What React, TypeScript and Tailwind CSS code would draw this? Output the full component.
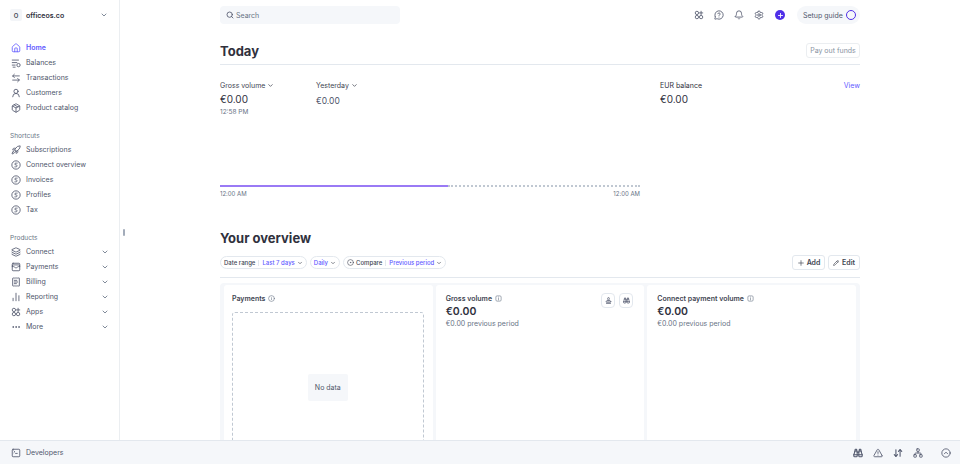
import {
  House, ArrowLeftRight, UserRound, Package, Rocket, Layers, WalletCards, ReceiptText,
  ChartNoAxesColumn, Ellipsis, SquareTerminal, MessageCircleQuestion, Bell, Settings, Search,
  ChevronDown, Plus, Pencil, Info, Binoculars, TriangleAlert, ArrowDownUp, Network, CircleChevronUp,
  CircleDot, Stamp,
} from "lucide-react";
import type { ReactNode } from "react";

const AppsIcon = ({ className }: { className?: string }) => (
  <svg className={className} viewBox="0 0 24 24" fill="none" stroke="currentColor" strokeWidth="2">
    <circle cx="7" cy="7" r="4" />
    <circle cx="7" cy="17" r="4" />
    <circle cx="17" cy="17" r="4" />
    <path d="M17 3v8M13 7h8" strokeLinecap="round" />
  </svg>
);

const BalancesIcon = ({ className }: { className?: string }) => (
  <svg className={className} viewBox="0 0 24 24" fill="none" stroke="currentColor" strokeWidth="2">
    <path d="M3 5h15M3 11h11M3 17h7M5 22h5" strokeLinecap="round" />
    <circle cx="18" cy="17" r="4" />
  </svg>
);

const ShortcutIcon = ({ className }: { className?: string }) => (
  <svg className={className} viewBox="0 0 24 24" fill="none" stroke="currentColor" strokeWidth="2">
    <circle cx="12" cy="12" r="10" />
    <path d="M15 7.5h-5l-.5 4h2.5a2.5 2.5 0 010 5H9" strokeWidth="1.8" strokeLinecap="round" />
  </svg>
);

const SquareInfo = () => (
  <svg className="h-[7px] w-[7px] text-[#687385]" viewBox="0 0 24 24" fill="none" stroke="currentColor" strokeWidth="2">
    <rect x="3" y="3" width="18" height="18" rx="4" />
    <path d="M12 11v6M12 7h.01" strokeLinecap="round" />
  </svg>
);

const mainNav = [
  { label: "Balances", icon: BalancesIcon },
  { label: "Transactions", icon: ArrowLeftRight },
  { label: "Customers", icon: UserRound },
  { label: "Product catalog", icon: Package },
];
const shortcuts = [
  { label: "Subscriptions", icon: Rocket },
  { label: "Connect overview", icon: ShortcutIcon },
  { label: "Invoices", icon: ShortcutIcon },
  { label: "Profiles", icon: ShortcutIcon },
  { label: "Tax", icon: ShortcutIcon },
];
const products = [
  { label: "Connect", icon: Layers },
  { label: "Payments", icon: WalletCards },
  { label: "Billing", icon: ReceiptText },
  { label: "Reporting", icon: ChartNoAxesColumn },
  { label: "Apps", icon: AppsIcon },
  { label: "More", icon: Ellipsis },
];

function NavRow({ label, icon: Icon, chevron }: { label: string; icon: any; chevron?: boolean }) {
  return (
    <div className="flex h-[15px] items-center text-[#4f566b]">
      <Icon className="ml-[11px] h-[10px] w-[10px] shrink-0" strokeWidth={2} />
      <span className="ml-[5px] flex-1 whitespace-nowrap">{label}</span>
      {chevron && <ChevronDown className="mr-[10px] h-[8px] w-[8px] text-[#687385]" strokeWidth={2.5} />}
    </div>
  );
}

function Pill({ children }: { children: ReactNode }) {
  return (
    <div className="flex h-[13px] items-center rounded-full border border-[#e3e8ee] px-[3px] text-[6px] font-medium whitespace-nowrap">
      {children}
    </div>
  );
}

function Card({ title, children, actions }: { title: string; children?: ReactNode; actions?: boolean }) {
  return (
    <div className="flex min-w-0 flex-col rounded-t-[3px] bg-white pl-[10px] pt-[9px]">
      <div className="flex items-start justify-between">
        <div>
          <div className="flex h-[9px] items-center gap-[3px] text-[7px] leading-none font-semibold text-[#414552]">
            {title}
            <SquareInfo />
          </div>
          {children}
        </div>
        {actions && (
          <div className="-mt-[1px] mr-[11px] flex gap-[4px]">
            <div className="flex h-[15px] w-[14px] items-center justify-center rounded-[4px] border border-[#e3e8ee] text-[#4f566b]">
              <Stamp className="h-[7px] w-[7px]" strokeWidth={2.5} />
            </div>
            <div className="flex h-[15px] w-[14px] items-center justify-center rounded-[4px] border border-[#e3e8ee] text-[#4f566b]">
              <Binoculars className="h-[7px] w-[7px]" strokeWidth={2.5} />
            </div>
          </div>
        )}
      </div>
    </div>
  );
}

const Metric = () => (
  <>
    <div className="mt-[2px] text-[10.5px] leading-[13px] font-semibold text-[#30313d]">€0.00</div>
    <div className="text-[7px] leading-[11px] text-[#687385]">€0.00 previous period</div>
  </>
);

export default function App() {
  return (
    <div className="relative flex h-[464px] w-[960px] flex-col overflow-hidden bg-white text-[7px] leading-[15px] text-[#414552] [font-family:Inter,sans-serif]">
      <div className="flex min-h-0 flex-1">
        <aside className="w-[120px] shrink-0 border-r border-[#ebeef1] pt-[7px]">
          <div className="flex h-[16px] items-center">
            <div className="ml-[10px] flex h-[12px] w-[12px] items-center justify-center rounded-[2px] bg-[#f3f5f8] text-[6px] font-semibold">O</div>
            <span className="ml-[4px] flex-1 font-semibold text-[#30313d]">officeos.co</span>
            <ChevronDown className="mr-[11px] h-[8px] w-[8px] text-[#687385]" strokeWidth={2.5} />
          </div>
          <div className="mt-[17px]">
            <div className="flex h-[15px] items-center font-semibold text-[#635bff]">
              <House className="ml-[11px] h-[10px] w-[10px]" strokeWidth={2} />
              <span className="ml-[5px]">Home</span>
            </div>
            {mainNav.map((n) => (
              <NavRow key={n.label} {...n} />
            ))}
          </div>
          <div className="mt-[15px] pl-[10px] text-[6.5px] leading-[13px] text-[#687385]">Shortcuts</div>
          <div className="-mt-[1px]">
            {shortcuts.map((n) => (
              <NavRow key={n.label} {...n} />
            ))}
          </div>
          <div className="mt-[15px] pl-[10px] text-[6.5px] leading-[13px] text-[#687385]">Products</div>
          <div className="-mt-[1px]">
            {products.map((n) => (
              <NavRow key={n.label} {...n} chevron />
            ))}
          </div>
        </aside>

        <main className="min-w-0 flex-1 overflow-hidden pl-[100px] pr-[100px] pt-[6px]">
          <div className="flex h-[18px] items-center justify-between">
            <div className="flex h-[18px] w-[180px] items-center rounded-[4px] bg-[#f5f7fa] pl-[6px] text-[#687385]">
              <Search className="h-[8px] w-[8px] text-[#4f566b]" strokeWidth={2.5} />
              <span className="ml-[2px]">Search</span>
            </div>
            <div className="flex items-center text-[#4f566b]">
              <AppsIcon className="h-[10px] w-[10px]" />
              <MessageCircleQuestion className="ml-[10px] h-[10px] w-[10px]" strokeWidth={2} />
              <Bell className="ml-[10px] h-[10px] w-[10px]" strokeWidth={2} />
              <Settings className="ml-[10px] h-[10px] w-[10px]" strokeWidth={2} />
              <div className="ml-[11px] flex h-[10px] w-[10px] items-center justify-center rounded-full bg-[#4f2fe8]">
                <Plus className="h-[7px] w-[7px] text-white" strokeWidth={3} />
              </div>
              <div className="ml-[12px] flex h-[18px] w-[63px] items-center rounded-full bg-[#f5f7fa] pl-[6px]">
                <span className="flex-1 whitespace-nowrap">Setup guide</span>
                <div className="mr-[4px] h-[10px] w-[10px] rounded-full border-[1.5px] border-[#4f2fe8]" />
              </div>
            </div>
          </div>

          <div className="mt-[13px] flex h-[28px] items-center justify-between border-b border-[#e3e8ee]">
            <h1 className="pt-[1px] text-[13px] font-bold text-[#30313d]">Today</h1>
            <div className="flex h-[15px] w-[54px] items-center justify-center rounded-[3px] border border-[#ebeef1] text-[#8792a2]">Pay out funds</div>
          </div>

          <div className="mt-[13px] flex">
            <div className="w-[96px]">
              <div className="flex items-center gap-[2px]">
                Gross volume <ChevronDown className="h-[7px] w-[7px]" strokeWidth={2.5} />
              </div>
              <div className="text-[10px] leading-[13px] text-[#30313d]">€0.00</div>
              <div className="mt-[1px] text-[6.5px] leading-[11px] text-[#687385]">12:58 PM</div>
            </div>
            <div className="w-[344px]">
              <div className="flex items-center gap-[2px]">
                Yesterday <ChevronDown className="h-[7px] w-[7px]" strokeWidth={2.5} />
              </div>
              <div className="mt-[2px] text-[8.5px] leading-[13px] text-[#4f566b]">€0.00</div>
            </div>
            <div className="flex-1">
              <div className="text-[#30313d]">EUR balance</div>
              <div className="text-[10px] leading-[13px] text-[#30313d]">€0.00</div>
            </div>
            <div className="text-[#635bff]">View</div>
          </div>

          <div className="mt-[67px] w-[420px]">
            <div className="flex h-[2px]">
              <div className="h-[2px] w-[228px] bg-[#9a7af5]" />
              <div className="h-0 flex-1 border-t-[2px] border-dotted border-[#c0c8d2]" />
            </div>
            <div className="mt-[1px] flex justify-between text-[6px] leading-[11px] text-[#687385]">
              <span>12:00 AM</span>
              <span>12:00 AM</span>
            </div>
          </div>

          <h2 className="mt-[29px] text-[13px] leading-[20px] font-bold text-[#30313d]">Your overview</h2>

          <div className="mt-[7px] flex items-center justify-between">
            <div className="flex gap-[3px]">
              <Pill>
                Date range <span className="mx-[3px] h-[6px] w-px bg-[#e3e8ee]" />
                <span className="text-[#635bff]">Last 7 days</span>
                <ChevronDown className="ml-[2px] h-[6px] w-[6px]" strokeWidth={2.5} />
              </Pill>
              <Pill>
                <span className="text-[#635bff]">Daily</span>
                <ChevronDown className="ml-[2px] h-[6px] w-[6px]" strokeWidth={2.5} />
              </Pill>
              <Pill>
                <CircleDot className="mr-[2px] h-[7px] w-[7px]" strokeWidth={2} />
                Compare <span className="mx-[3px] h-[6px] w-px bg-[#e3e8ee]" />
                <span className="text-[#635bff]">Previous period</span>
                <ChevronDown className="ml-[2px] h-[6px] w-[6px]" strokeWidth={2.5} />
              </Pill>
            </div>
            <div className="flex gap-[3px] font-semibold">
              <div className="flex h-[15px] w-[33px] items-center justify-center rounded-[3px] border border-[#e3e8ee]">
                <Plus className="mr-[2px] h-[8px] w-[8px]" strokeWidth={2} /> Add
              </div>
              <div className="flex h-[15px] w-[32px] items-center justify-center rounded-[3px] border border-[#e3e8ee]">
                <Pencil className="mr-[3px] h-[6px] w-[6px]" strokeWidth={2.5} /> Edit
              </div>
            </div>
          </div>

          <div className="mt-[7px] border-t border-[#e3e8ee] pt-[5px]">
            <div className="grid h-[180px] grid-cols-3 gap-[3px] rounded-t-[4px] bg-[#f5f7fa] px-[4px] pt-[2px]">
              <div className="flex min-w-0 flex-col rounded-t-[3px] bg-white pl-[8px] pr-[9px] pt-[9px]">
                <div className="flex h-[9px] items-center gap-[3px] text-[7px] leading-none font-semibold text-[#414552]">
                  Payments
                  <Info className="h-[7px] w-[7px] text-[#687385]" strokeWidth={2} />
                </div>
                <div className="mt-[9px] flex h-[151px] items-center justify-center rounded-[3px] border border-dashed border-[#c0c8d2]">
                  <div className="flex h-[27px] w-[40px] items-center justify-center rounded-[2px] bg-[#f5f7fa] text-[#4f566b]">No data</div>
                </div>
              </div>
              <Card title="Gross volume" actions>
                <Metric />
              </Card>
              <Card title="Connect payment volume">
                <Metric />
              </Card>
            </div>
          </div>
        </main>
      </div>

      <footer className="relative flex h-[24px] shrink-0 items-center border-t border-[#e3e8ee] bg-[#f5f7fa] text-[#4f566b]">
        <SquareTerminal className="ml-[11px] h-[10px] w-[10px]" strokeWidth={2} />
        <span className="ml-[5px] flex-1">Developers</span>
        <div className="mr-[9px] flex items-center">
          <Binoculars className="h-[10px] w-[10px]" strokeWidth={2.5} />
          <TriangleAlert className="ml-[10px] h-[10px] w-[10px]" strokeWidth={2} />
          <ArrowDownUp className="ml-[10px] h-[10px] w-[10px]" strokeWidth={2.5} />
          <Network className="ml-[10px] h-[10px] w-[10px]" strokeWidth={2} />
          <CircleChevronUp className="ml-[18px] h-[10px] w-[10px]" strokeWidth={2} />
        </div>
      </footer>

      <div className="absolute left-[123px] top-[229px] h-[7px] w-[2px] rounded-full bg-[#a3acba]" />
    </div>
  );
}
